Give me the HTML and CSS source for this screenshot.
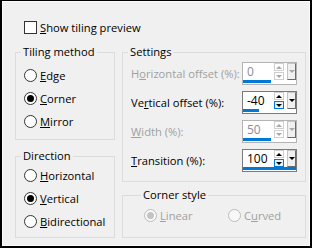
FILE: index.html
```html
<!DOCTYPE html>
<html lang="en">
<head>
<meta charset="utf-8">
<title>Seamless Tiling</title>
<link rel="stylesheet" href="styles.css">
</head>
<body>
<div class="dialog">
  <div class="check-row">
    <span class="checkbox"></span>
    <span><u>S</u>how tiling preview</span>
  </div>
  <div class="panes">
    <div class="col col-left">
      <fieldset class="group tiling">
        <legend>Tiling method</legend>
        <div class="opt"><span class="radio"></span><span><u>E</u>dge</span></div>
        <div class="opt"><span class="radio on"></span><span><u>C</u>orner</span></div>
        <div class="opt"><span class="radio"></span><span><u>M</u>irror</span></div>
      </fieldset>
      <fieldset class="group direction">
        <legend>Direction</legend>
        <div class="opt"><span class="radio"></span><span><u>H</u>orizontal</span></div>
        <div class="opt"><span class="radio on"></span><span><u>V</u>ertical</span></div>
        <div class="opt"><span class="radio"></span><span><u>B</u>idirectional</span></div>
      </fieldset>
    </div>
    <div class="col col-right">
      <fieldset class="group settings">
        <legend>Settings</legend>
        <div class="rows">
          <div class="row off">
            <span>H<u>o</u>rizontal offset (%):</span>
            <div class="spin">
              <div class="spin-top">
                <span class="val">0</span>
                <span class="arrows"><span class="ar up"></span><span class="ar dn"></span></span>
                <span class="drop"></span>
              </div>
              <div class="track"><div class="bar" style="width:52%"></div></div>
            </div>
          </div>
          <div class="row">
            <span>Ve<u>r</u>tical offset (%):</span>
            <div class="spin">
              <div class="spin-top">
                <span class="val">-40</span>
                <span class="arrows"><span class="ar up"></span><span class="ar dn hot"></span></span>
                <span class="drop"></span>
              </div>
              <div class="track"><div class="bar" style="width:30%"></div></div>
            </div>
          </div>
          <div class="row off">
            <span><u>W</u>idth (%):</span>
            <div class="spin">
              <div class="spin-top">
                <span class="val">50</span>
                <span class="arrows"><span class="ar up"></span><span class="ar dn"></span></span>
                <span class="drop"></span>
              </div>
              <div class="track"><div class="bar" style="width:52%"></div></div>
            </div>
          </div>
          <div class="row">
            <span><u>T</u>ransition (%):</span>
            <div class="spin">
              <div class="spin-top">
                <span class="val">100</span>
                <span class="arrows"><span class="ar up"></span><span class="ar dn hot"></span></span>
                <span class="drop"></span>
              </div>
              <div class="track"><div class="bar" style="width:100%"></div></div>
            </div>
          </div>
        </div>
      </fieldset>
      <fieldset class="group corner">
        <legend>Corner style</legend>
        <div class="opts-h">
          <div class="opt off"><span class="radio on"></span><span><u>L</u>inear</span></div>
          <div class="opt off"><span class="radio"></span><span>C<u>u</u>rved</span></div>
        </div>
      </fieldset>
    </div>
  </div>
</div>
</body>
</html>
```

FILE: styles.css
```css
body { margin:0; font-family:"Open Sans", "Liberation Sans", sans-serif; font-size:11.2px; color:#000; }
u { text-underline-offset:1px; }

.dialog { width:312px; height:248px; box-sizing:border-box; border:2px solid #000; border-top-width:1px; background:#f0f0f0; box-shadow:inset 0 0 0 1px #fbfbfb; padding:20px 4px 0 13px; white-space:nowrap; }

.check-row { display:flex; align-items:center; height:13px; padding-left:9px; }
.checkbox { width:13px; height:13px; box-sizing:border-box; border:1px solid #333; background:#fff; margin-right:3px; }

.panes { display:flex; gap:7px; margin-top:10px; }
.col { display:flex; flex-direction:column; }
.col-left { width:100px; }
.col-right { width:184px; }

.group { margin:0; padding:0 8px; border:1px solid #dcdcdc; min-width:0; }
.group legend { padding:0 2px; margin-left:-3px; line-height:16px; }
.tiling { padding-top:4px; padding-bottom:6px; }
.direction { margin-top:8px; padding-bottom:4px; }
.settings { padding-top:2px; padding-bottom:9px; }
.corner { margin-top:5px; padding:1px 8px 10px 21px; }

.opt { display:flex; align-items:center; height:23px; }
.opt.off { color:#a0a0a0; }
.radio { width:13px; height:13px; box-sizing:border-box; border:1px solid #333; border-radius:50%; background:#fff; margin-right:3px; display:flex; align-items:center; justify-content:center; flex:none; }
.radio.on::after { content:""; width:7px; height:7px; border-radius:50%; background:#000; }
.off .radio { border-color:#bcbcbc; background:#f8f8f8; }
.off .radio.on::after { background:#c4c4c4; }
.opts-h { display:grid; grid-template-columns:84px auto; }

.rows { display:flex; flex-direction:column; gap:6px; }
.row { display:flex; justify-content:space-between; align-items:center; height:23px; }
.row.off { color:#a0a0a0; }

.spin { width:55px; height:23px; box-sizing:border-box; border:1px solid #7a7a7a; background:#fff; display:flex; flex-direction:column; flex:none; }
.off .spin { border-color:#b4b4b4; }
.spin-top { display:flex; height:17px; }
.val { flex:1; padding-left:4px; line-height:18px; font-size:12px; color:#000; }
.off .val { color:#8a8c98; }
.arrows { width:10px; display:flex; flex-direction:column; margin-right:3px; }
.ar { height:8px; box-sizing:border-box; border:1px solid #cfcfcf; display:flex; align-items:center; justify-content:center; }
.ar + .ar { margin-top:1px; }
.ar::after { content:""; border-left:3px solid transparent; border-right:3px solid transparent; }
.ar.up::after { border-bottom:3px solid #000; }
.ar.dn::after { border-top:3px solid #000; }
.off .ar.up::after { border-bottom-color:#a8a8a8; }
.off .ar.dn::after { border-top-color:#a8a8a8; }
.ar.hot { border-color:#0078d7; background:#e5f1fb; }
.drop { width:9px; box-sizing:border-box; border:1px solid #c4c4c4; border-right-color:#6a6a6a; border-bottom-color:#6a6a6a; background:#f0f0f0; display:flex; align-items:center; justify-content:center; }
.drop::after { content:""; border-left:3px solid transparent; border-right:3px solid transparent; border-top:3px solid #000; }
.off .drop::after { border-top-color:#a8a8a8; }
.track { height:3px; }
.bar { height:100%; background:#0078d7; }
```
